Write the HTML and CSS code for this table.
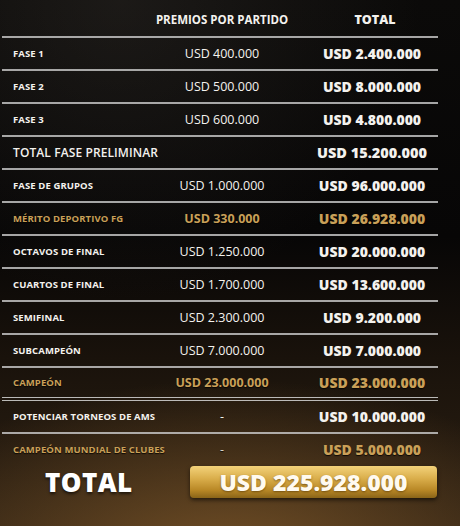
FILE: index.html
```html
<!DOCTYPE html>
<html lang="es">
<head>
<meta charset="utf-8">
<title>Premios</title>
<link rel="stylesheet" href="styles.css">
</head>
<body>
<div class="page">
  <div class="table">
    <div class="row head">
      <div class="c-label"></div>
      <div class="c-mid">PREMIOS POR PARTIDO</div>
      <div class="c-tot">TOTAL</div>
    </div>
    <div class="row">
      <div class="c-label">FASE 1</div>
      <div class="c-mid">USD 400.000</div>
      <div class="c-tot">USD 2.400.000</div>
    </div>
    <div class="row">
      <div class="c-label">FASE 2</div>
      <div class="c-mid">USD 500.000</div>
      <div class="c-tot">USD 8.000.000</div>
    </div>
    <div class="row">
      <div class="c-label">FASE 3</div>
      <div class="c-mid">USD 600.000</div>
      <div class="c-tot">USD 4.800.000</div>
    </div>
    <div class="row sum">
      <div class="c-label">TOTAL FASE PRELIMINAR</div>
      <div class="c-mid"></div>
      <div class="c-tot">USD 15.200.000</div>
    </div>
    <div class="row">
      <div class="c-label">FASE DE GRUPOS</div>
      <div class="c-mid">USD 1.000.000</div>
      <div class="c-tot">USD 96.000.000</div>
    </div>
    <div class="row gold">
      <div class="c-label">MÉRITO DEPORTIVO FG</div>
      <div class="c-mid">USD 330.000</div>
      <div class="c-tot">USD 26.928.000</div>
    </div>
    <div class="row">
      <div class="c-label">OCTAVOS DE FINAL</div>
      <div class="c-mid">USD 1.250.000</div>
      <div class="c-tot">USD 20.000.000</div>
    </div>
    <div class="row">
      <div class="c-label">CUARTOS DE FINAL</div>
      <div class="c-mid">USD 1.700.000</div>
      <div class="c-tot">USD 13.600.000</div>
    </div>
    <div class="row">
      <div class="c-label">SEMIFINAL</div>
      <div class="c-mid">USD 2.300.000</div>
      <div class="c-tot">USD 9.200.000</div>
    </div>
    <div class="row">
      <div class="c-label">SUBCAMPEÓN</div>
      <div class="c-mid">USD 7.000.000</div>
      <div class="c-tot">USD 7.000.000</div>
    </div>
    <div class="row gold double">
      <div class="c-label">CAMPEÓN</div>
      <div class="c-mid">USD 23.000.000</div>
      <div class="c-tot">USD 23.000.000</div>
    </div>
    <div class="row">
      <div class="c-label">POTENCIAR TORNEOS DE AMS</div>
      <div class="c-mid">-</div>
      <div class="c-tot">USD 10.000.000</div>
    </div>
    <div class="row gold last">
      <div class="c-label">CAMPEÓN MUNDIAL DE CLUBES</div>
      <div class="c-mid">-</div>
      <div class="c-tot">USD 5.000.000</div>
    </div>
  </div>
  <div class="grand">
    <div class="grand-label">TOTAL</div>
    <div class="grand-box">USD 225.928.000</div>
  </div>
</div>
</body>
</html>
```

FILE: styles.css
```css
* { box-sizing: border-box; }
html, body { margin: 0; padding: 0; }
body {
  width: 460px;
  height: 526px;
  overflow: hidden;
  font-family: "Open Sans", "DejaVu Sans", sans-serif;
  color: #f4f2ee;
  background:
    radial-gradient(ellipse 360px 180px at 230px 560px, rgba(130, 90, 42, 0.8), rgba(60, 40, 20, 0) 100%),
    radial-gradient(ellipse 300px 300px at 120px 0px, rgba(60, 55, 50, 0.35), rgba(0,0,0,0) 100%),
    linear-gradient(180deg, #0b0a09 0%, #070606 45%, #19120b 68%, #33251566 100%),
    #2a1e12;
}
.page {
  padding: 0 22px 0 2px;
}
.table {
  width: 436px;
}
.row {
  display: grid;
  grid-template-columns: 150px 140px 146px;
  align-items: center;
  height: 33px;
  border-bottom: 2px solid rgba(205, 205, 205, 0.8);
}
.row.head { height: 38px; padding-top: 2px; }
.row.double { border-bottom: 4px double rgba(215, 215, 215, 0.85); height: 33px; }
.row.last { border-bottom: none; height: 30px; }
.c-label {
  padding-left: 11px;
  font-size: 9.5px;
  font-weight: 700;
  letter-spacing: 0.1px;
  white-space: nowrap;
}
.c-mid {
  text-align: center;
  font-size: 12.5px;
  font-weight: 400;
  white-space: nowrap;
}
.c-tot {
  text-align: center;
  padding-left: 14px;
  font-size: 14px;
  font-weight: 800;
  white-space: nowrap;
}
.head .c-mid {
  font-size: 11.5px;
  font-weight: 700;
}
.head .c-tot { font-size: 12.5px; padding-left: 20px; }
.sum .c-label { font-size: 12px; font-weight: 600; }
.sum .c-tot { font-size: 14.5px; }
.gold .c-label, .gold .c-mid, .gold .c-tot {
  color: #c9a058;
  text-shadow: 0 1px 1px rgba(0,0,0,0.8);
}
.gold .c-mid { font-weight: 700; }
.last .c-mid { font-weight: 400; color: #d8d2c8; }
.grand {
  display: flex;
  align-items: center;
  margin-top: 0;
}
.grand-label {
  width: 188px;
  padding-left: 43px;
  font-size: 26px;
  font-weight: 800;
  color: #ffffff;
  letter-spacing: 0.4px;
  text-shadow: 0 2px 3px rgba(0,0,0,0.6);
}
.grand-box {
  width: 247px;
  height: 32px;
  border-radius: 4px;
  background: linear-gradient(180deg, #f3d27a 0%, #d9ad4a 40%, #b98826 75%, #8a6418 100%);
  box-shadow: 0 2px 4px rgba(0,0,0,0.6);
  display: flex;
  align-items: center;
  justify-content: center;
  font-size: 23px;
  font-weight: 800;
  color: #fffaf0;
  text-shadow: 0 1px 2px rgba(90, 60, 10, 0.7);
}
```
